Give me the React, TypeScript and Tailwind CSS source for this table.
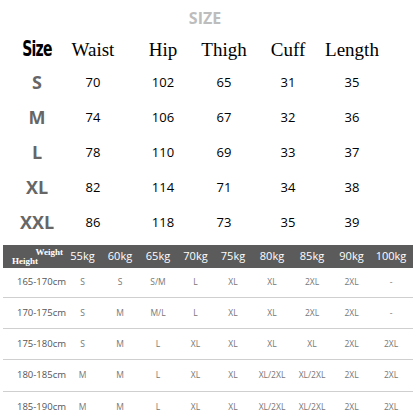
const sizeRows = [
  { size: 'S', vals: ['70', '102', '65', '31', '35'] },
  { size: 'M', vals: ['74', '106', '67', '32', '36'] },
  { size: 'L', vals: ['78', '110', '69', '33', '37'] },
  { size: 'XL', vals: ['82', '114', '71', '34', '38'] },
  { size: 'XXL', vals: ['86', '118', '73', '35', '39'] },
];

const heads = ['Waist', 'Hip', 'Thigh', 'Cuff', 'Length'];
// offsets so each 56px cell sits on the column centre of the picture
const gaps = ['ml-0', 'ml-[14px]', 'ml-[5px]', 'ml-[8px]', 'ml-[8px]'];

const weights = ['55kg', '60kg', '65kg', '70kg', '75kg', '80kg', '85kg', '90kg', '100kg'];

const fitRows = [
  { h: '165-170cm', v: ['S', 'S', 'S/M', 'L', 'XL', 'XL', '2XL', '2XL', '-'], cls: 'h-[30px] border-b' },
  { h: '170-175cm', v: ['S', 'M', 'M/L', 'L', 'XL', 'XL', '2XL', '2XL', '-'], cls: 'h-[31px] border-b' },
  { h: '175-180cm', v: ['S', 'M', 'L', 'XL', 'XL', 'XL', 'XL', '2XL', '2XL'], cls: 'h-[31px] border-b' },
  { h: '180-185cm', v: ['M', 'M', 'L', 'XL', 'XL', 'XL/2XL', 'XL/2XL', '2XL', '2XL'], cls: 'h-[32px] border-b' },
  { h: '185-190cm', v: ['M', 'M', 'L', 'XL', 'XL', 'XL/2XL', 'XL/2XL', '2XL', '2XL'], cls: 'h-[31px]' },
];

const gridCols = 'grid grid-cols-[61px_37px_38px_38px_37px_38px_40px_40px_39px_40px]';

export default function App() {
  return (
    <div className="w-[416px] h-[416px] overflow-hidden bg-white pt-[8px] font-['Open_Sans',sans-serif]">
      <div className="h-5 leading-5 text-center text-[16px] font-bold text-[#bdbdbd] pr-[6px]">SIZE</div>

      <div className="mt-[7px] h-[30px] flex items-center pl-[9px]">
        <div className="w-14 flex justify-center">
          <span className="font-['DejaVu_Sans_Condensed','DejaVu_Sans',sans-serif] font-black text-[21px] text-black tracking-[-1px] scale-x-[0.74] inline-block">
            Size
          </span>
        </div>
        {heads.map((h, i) => (
          <div
            key={h}
            className={`w-14 text-center whitespace-nowrap font-['Liberation_Serif',serif] text-[19px] text-black ${gaps[i]}`}
          >
            {h}
          </div>
        ))}
      </div>

      {sizeRows.map((r) => (
        <div key={r.size} className="h-[35px] flex items-center pl-[9px]">
          <div className="w-14 text-center text-[18px] font-bold text-[#666]">{r.size}</div>
          {r.vals.map((v, i) => (
            <div key={i} className={`w-14 text-center text-[13px] text-black ${gaps[i]}`}>
              {v}
            </div>
          ))}
        </div>
      ))}

      <div className="mt-[5px] mx-[3px]">
        <div className={`${gridCols} h-[23px] bg-[#5b5b5b] items-center text-white`}>
          <div className="flex flex-col font-['Liberation_Serif',serif] font-bold text-[9px] leading-[9px]">
            <span className="self-end pr-[1px]">Weight</span>
            <span className="self-start pl-[9px]">Height</span>
          </div>
          {weights.map((w) => (
            <div key={w} className="text-center text-[11px]">
              {w}
            </div>
          ))}
        </div>

        {fitRows.map((r) => (
          <div key={r.h} className={`${gridCols} ${r.cls} border-[#cfcfcf] items-center`}>
            <div className="pl-[14px] text-[9.5px] text-[#555] whitespace-nowrap">{r.h}</div>
            {r.v.map((v, i) => (
              <div key={i} className="text-center text-[8.5px] text-[#777] whitespace-nowrap">
                {v}
              </div>
            ))}
          </div>
        ))}
      </div>
    </div>
  );
}
